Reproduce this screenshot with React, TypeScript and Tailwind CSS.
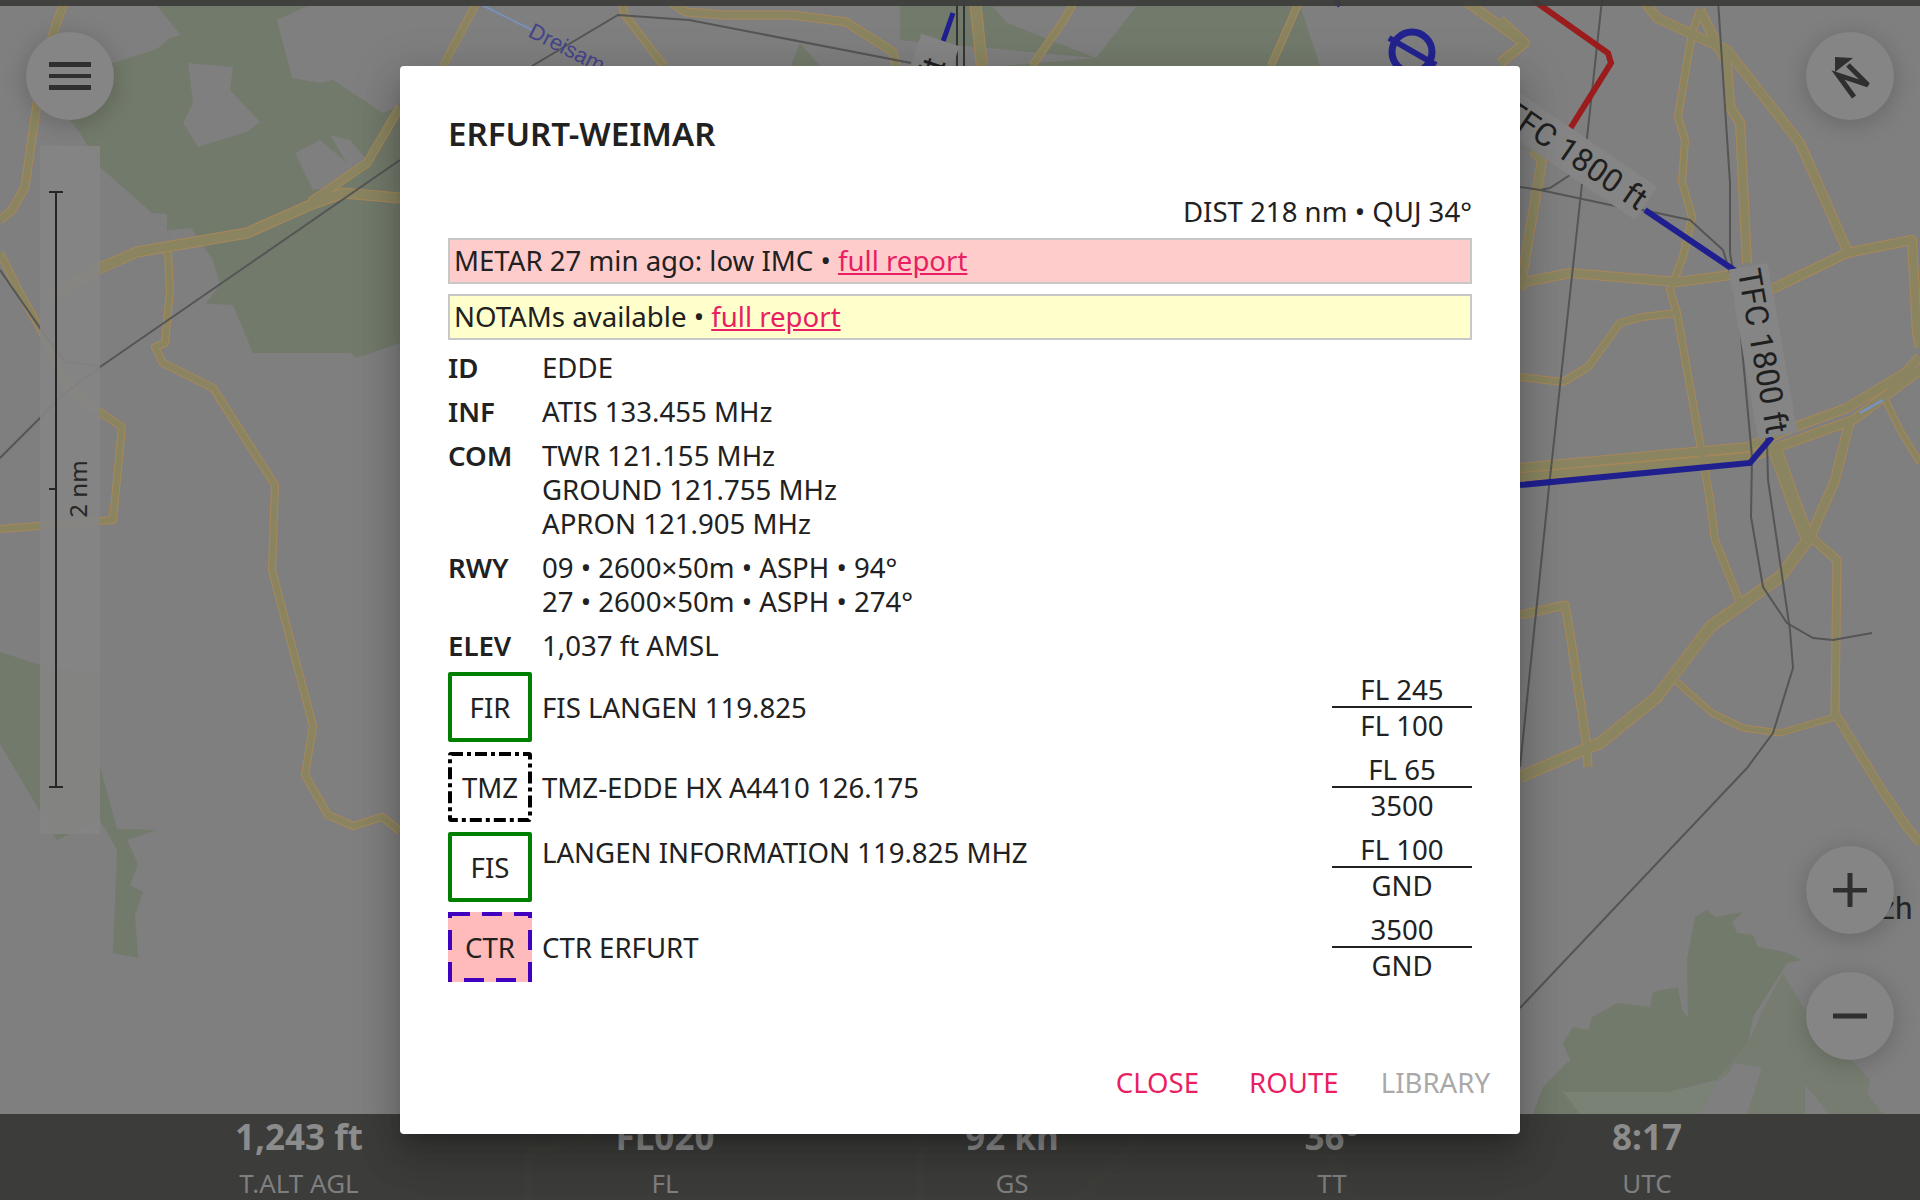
import React from "react";

const font = { fontFamily: '"Noto Sans", sans-serif' };

type R = [string, number];
const roads: R[] = [
  ["65,0 53,33 37,103 25,187 12,210 0,220", 7],
  ["50,297 100,268 137,252 247,233 310,205 343,193 400,198", 9],
  ["310,202 328,190 367,163 400,107", 7],
  ["168,252 170,290 165,343 155,347 163,363 213,388 275,485 272,570 313,726 305,775 328,815 353,826 382,817 400,831", 6],
  ["0,253 20,293 40,328 67,385 82,400 122,427 113,520 0,529", 6],
  ["443,66 478,0", 6],
  ["621,0 625,15 664,66", 6],
  ["668,0 686,12 725,15 793,15 846,22 893,52 896,66", 7],
  ["975,0 982,66", 10],
  ["1032,66 1064,20 1075,0", 6],
  ["1271,66 1300,0", 6],
  ["1464,0 1520,40", 8],
  ["1500,20 1525,43 1500,63", 8],
  ["1643,0 1657,18 1727,50 1800,143 1847,250", 8],
  ["1700,10 1692,33 1678,117 1685,140 1682,182 1692,217 1683,257 1670,290 1677,313 1700,443 1710,500 1715,540 1740,602", 6],
  ["1700,10 1720,50 1727,63 1730,107 1740,123 1747,263", 8],
  ["1520,283 1570,273 1677,282 1730,275", 8],
  ["1770,290 1847,253 1912,240 1917,333 1920,347", 8],
  ["1533,150 1542,160 1520,290", 8],
  ["1520,377 1563,382 1588,367 1620,323 1642,317 1677,313", 6],
  ["1520,468 1748,447 1787,430 1847,408 1905,373 1920,357", 8],
  ["1520,477 1750,457 1853,420 1920,370", 8],
  ["1773,443 1793,500 1807,537", 12],
  ["1850,420 1835,480 1810,538", 8],
  ["1883,395 1900,430 1920,463", 5],
  ["1520,777 1600,743 1657,697 1710,627 1780,577 1810,537", 10],
  ["1812,538 1837,560 1835,713 1880,787 1907,827 1920,843", 7],
  ["1520,615 1565,605 1570,633 1587,747 1588,767", 7],
  ["1677,682 1712,713 1743,728 1780,733 1835,717", 5],
  ["529,1134 529,1200", 5],
  ["532,1153 596,1135", 5],
  ["921,1135 921,1200", 5],
  ["1326,1147 1352,1200", 5],
  ["1079,1200 1141,1137", 5],
];

const wires = [
  "400,160 100,367 60,397 40,418 0,458",
  "0,270 40,328 65,362 100,366",
  "532,66 618,15 689,20 911,63",
  "1602,0 1549,487 1520,767",
  "1718,0 1730,183 1730,253 1737,293 1752,457 1751,517 1763,587 1787,623 1813,638 1833,640 1872,633",
  "1733,290 1767,443 1768,480 1790,630 1793,668 1773,733 1747,768 1520,1008",
  "1520,187 1540,190 1550,188 1570,175",
  "1540,190 1620,207 1643,210 1690,220 1723,250 1730,273",
];

function MapLayer() {
  const forest = "#727a6b";
  const bg = "#7f7f7f";
  return (
    <svg className="absolute inset-0 h-[1200px] w-[1920px]" viewBox="0 0 1920 1200">
      <rect width="1920" height="1200" fill={bg} />
      <polygon fill={forest} points="157,6 400,6 400,343 357,358 350,353 253,353 233,305 197,303 167,230 152,213 100,167 80,133 70,120 113,63 157,49 170,38 180,35 193,50" />
      <polygon fill={bg} points="277,20 307,6 400,6 400,105 383,113 333,80 320,83 292,78" />
      <polygon fill={bg} points="188,63 233,67 230,90 260,122 247,132 198,147 183,123 193,103" />
      <polygon fill={bg} points="295,153 320,140 347,163 330,135 350,140 367,160 333,187 313,190" />
      <polygon fill={bg} points="152,213 167,214 167,230 191,228 213,260 220,285 205,305 197,303 167,230" />
      <polygon fill={forest} points="0,652 40,665 100,672 100,766 117,829 157,830 127,840 138,864 130,885 143,892 135,915 138,958 113,953 117,850 100,820 57,840 0,744" />
      <polygon fill={forest} points="1533,1114 1543,1087 1570,1060 1563,1043 1573,1027 1588,1030 1592,1017 1605,1010 1617,1003 1650,1007 1653,992 1678,987 1682,1010 1688,1018 1687,960 1695,917 1707,910 1715,917 1743,912 1732,922 1737,933 1753,935 1758,947 1785,952 1802,960 1787,963 1753,1017 1748,1043 1717,1080 1668,1092 1563,1092 1582,1114" />
      <polygon fill="#7a8275" points="1563,1092 1668,1092 1717,1082 1700,1114 1580,1114" />
      <polygon fill="#767d70" points="1763,1010 1783,973 1803,1007 1870,1080 1867,1093 1883,1114 1747,1114 1733,1070 1717,1082 1748,1043" />
      <polygon fill={bg} points="1733,1063 1762,1068 1747,1114 1717,1114" />
      <polygon fill={bg} points="1805,1114 1805,1085 1830,1114" />
      <polygon fill={forest} points="900,6 1300,6 1320,66 791,66 800,43 820,66 1000,66 1096,58 1136,7 993,7 1007,23 1096,58 900,40" />
      <polyline points="482,5 532,30" fill="none" stroke="#7a90b8" strokeWidth="2" />
      {roads.map(([p, w], i) => (
        <polyline key={`e${i}`} points={p} fill="none" stroke="#a98759" strokeWidth={w + 2} strokeLinejoin="round" />
      ))}
      {roads.map(([p, w], i) => (
        <polyline key={`f${i}`} points={p} fill="none" stroke="#8a8560" strokeWidth={w} strokeLinejoin="round" />
      ))}
      <polyline points="1860,413 1883,400" fill="none" stroke="#7a90b8" strokeWidth="3" />
      {wires.map((p, i) => (
        <polyline key={`w${i}`} points={p} fill="none" stroke="#555555" strokeWidth="2" />
      ))}
      <line x1="957" y1="0" x2="957" y2="66" stroke="#1f1f1f" strokeWidth="1.5" />
      <line x1="964" y1="0" x2="964" y2="66" stroke="#1f1f1f" strokeWidth="1.5" />
      <polyline points="1533,0 1608,53 1611,63 1568,132" fill="none" stroke="#9b1c1c" strokeWidth="6" />
      <polyline points="953,13 939,53" fill="none" stroke="#1f1f8f" strokeWidth="5" />
      <polyline points="1645,210 1737,272" fill="none" stroke="#1f1f8f" strokeWidth="6" />
      <polyline points="1772,437 1750,463 1520,485" fill="none" stroke="#1f1f8f" strokeWidth="6" />
      <line x1="1336" y1="0" x2="1340" y2="6" stroke="#1f1f8f" strokeWidth="5" />
      <circle cx="1412" cy="52" r="20" fill="none" stroke="#232390" strokeWidth="7" />
      <line x1="1389" y1="38" x2="1436" y2="65" stroke="#232390" strokeWidth="6" />
      <g transform="rotate(27 527 36)">
        <text x="527" y="36" fontFamily="Liberation Sans" fontSize="22" fill="#44448a">Dreisam</text>
      </g>
      <g transform="rotate(34.4 1575 155)">
        <rect x="1489" y="135" width="172" height="40" fill="#858585" />
        <text x="1575" y="166" textAnchor="middle" fontFamily="Roboto" fontSize="32" fill="#1f1f1f">TFC 1800 ft</text>
      </g>
      <g transform="rotate(80 1763 351)">
        <rect x="1677" y="331" width="172" height="40" fill="#858585" />
        <text x="1763" y="362" textAnchor="middle" fontFamily="Roboto" fontSize="32" fill="#1f1f1f">TFC 1800 ft</text>
      </g>
      <g transform="rotate(-72 932 72)">
        <rect x="905" y="50" width="60" height="40" fill="#858585" />
        <text x="935" y="82" textAnchor="middle" fontFamily="Roboto" fontSize="32" fill="#1f1f1f">ft</text>
      </g>
      <text x="1850" y="919" fontFamily="Roboto" fontSize="32" fill="#262626">Erzh</text>
    </svg>
  );
}

function RoundButton({ className, children }: { className: string; children: React.ReactNode }) {
  return (
    <div
      className={`absolute flex h-[88px] w-[88px] items-center justify-center rounded-full bg-[#858585] shadow-[0_4px_24px_rgba(0,0,0,0.2)] ${className}`}
    >
      {children}
    </div>
  );
}

function ScaleBar() {
  return (
    <div className="absolute left-[40px] top-[146px] flex h-[688px] w-[60px] bg-[#858585]/90">
      <svg className="h-[688px] w-[30px]" viewBox="0 0 30 688">
        <path d="M9 46H23M16 46V641M9 641H23M9 343H16" fill="none" stroke="#262626" strokeWidth="2" />
      </svg>
      <div className="flex w-[16px] items-center justify-center pb-[2px]">
        <span className="shrink-0 -rotate-90 whitespace-nowrap text-[24px] leading-none text-[#262626]" style={font}>2 nm</span>
      </div>
    </div>
  );
}

function Stat({ value, label }: { value: string; label: string }) {
  return (
    <div className="flex flex-col items-center">
      <span className="text-[35px] font-bold leading-[46px] text-[#8c8c8c]">{value}</span>
      <span className="mt-[6px] text-[26px] leading-[34px] text-[#7f7f7f]">{label}</span>
    </div>
  );
}

function KV({ k, children }: { k: string; children: React.ReactNode }) {
  return (
    <div className="flex">
      <div className="w-[94px] shrink-0 font-semibold">{k}</div>
      <div>{children}</div>
    </div>
  );
}

function Airspace({
  tag,
  kind,
  text,
  top,
  bottom,
  alignTop,
}: {
  tag: string;
  kind: "solid" | "dashdot" | "dash";
  text: string;
  top: string;
  bottom: string;
  alignTop?: boolean;
}) {
  return (
    <div className="flex h-[70px]">
      <div
        className={`relative flex h-[70px] w-[84px] shrink-0 items-center justify-center rounded-[2px] ${
          kind === "solid" ? "border-4 border-[#008000]" : ""
        } ${kind === "dash" ? "bg-[#ffbbbb]" : ""}`}
      >
        {kind === "dashdot" && (
          <svg className="absolute inset-0" width="84" height="70" viewBox="0 0 84 70">
            <rect x="2" y="2" width="80" height="66" rx="1" fill="none" stroke="#000000" strokeWidth="4" strokeDasharray="12 4 4 4" />
          </svg>
        )}
        {kind === "dash" && (
          <svg className="absolute inset-0" width="84" height="70" viewBox="0 0 84 70">
            <rect x="2" y="2" width="80" height="66" fill="none" stroke="#4000c0" strokeWidth="4" strokeDasharray="20 12" />
          </svg>
        )}
        <span className="relative">{tag}</span>
      </div>
      <div className={`ml-[10px] flex-1 ${alignTop ? "pt-[3px]" : "self-center"}`}>{text}</div>
      <div className="flex w-[140px] shrink-0 flex-col text-center">
        <div className="h-[36px] border-b-2 border-[#212121]">{top}</div>
        <div className="h-[34px]">{bottom}</div>
      </div>
    </div>
  );
}

export default function App() {
  return (
    <div className="relative h-[1200px] w-[1920px] overflow-hidden bg-[#7f7f7f]" style={font}>
      <MapLayer />
      <div className="absolute inset-x-0 top-0 h-[6px] bg-[#3d3d3b]/95" />

      <RoundButton className="left-[26px] top-[32px]">
        <svg width="42" height="28" viewBox="0 0 42 28" fill="#2f2f2f">
          <rect x="0" y="0" width="42" height="5" />
          <rect x="0" y="12" width="42" height="4" />
          <rect x="0" y="23" width="42" height="5" />
        </svg>
      </RoundButton>
      <ScaleBar />
      <RoundButton className="left-[1806px] top-[32px]">
        <svg width="88" height="88" viewBox="0 0 88 88">
          <polygon points="29,25 47,26 29,40" fill="#2f2f2f" />
          <polyline points="42,33 62,53 32,43 48,65" fill="none" stroke="#2f2f2f" strokeWidth="5" />
        </svg>
      </RoundButton>
      <RoundButton className="left-[1806px] top-[846px]">
        <svg width="34" height="34" viewBox="0 0 34 34" fill="#2f2f2f">
          <rect x="0" y="15" width="34" height="4.5" />
          <rect x="14.5" y="0" width="5" height="34" />
        </svg>
      </RoundButton>
      <RoundButton className="left-[1806px] top-[972px]">
        <svg width="34" height="6" viewBox="0 0 34 6" fill="#2f2f2f">
          <rect x="0" y="0.5" width="34" height="5" />
        </svg>
      </RoundButton>

      <div className="absolute inset-x-0 bottom-0 grid h-[86px] grid-cols-[366px_366px_328px_312px_318px] justify-start bg-[#393937]/95 pl-[116px]">
        <Stat value="1,243 ft" label="T.ALT AGL" />
        <Stat value="FL020" label="FL" />
        <Stat value="92 kn" label="GS" />
        <Stat value="36°" label="TT" />
        <Stat value="8:17" label="UTC" />
      </div>

      <div className="absolute inset-0 flex items-center justify-center">
        <div className="flex h-[1068px] w-[1120px] flex-col rounded-[4px] bg-white pl-[48px] pt-[48px] text-[27.6px] leading-[34px] text-[#212121] shadow-[0_11px_15px_-7px_rgba(0,0,0,0.2),0_24px_38px_3px_rgba(0,0,0,0.14),0_9px_46px_8px_rgba(0,0,0,0.12)]">
          <div className="h-[40px] text-[33px] font-semibold leading-[40px]">ERFURT-WEIMAR</div>
          <div className="mr-[48px] mt-[40px] text-right">DIST 218 nm • QUJ 34°</div>
          <div className="mr-[48px] mt-[10px] h-[46px] border-2 border-[#c8c8c8] bg-[#ffcccc] pl-[4px] leading-[40px]">
            METAR 27 min ago: low IMC • <span className="text-[#e91e63] underline">full report</span>
          </div>
          <div className="mr-[48px] mt-[10px] h-[46px] border-2 border-[#c8c8c8] bg-[#ffffcc] pl-[4px] leading-[40px]">
            NOTAMs available • <span className="text-[#e91e63] underline">full report</span>
          </div>
          <div className="mr-[48px] mt-[10px] flex flex-col gap-[10px]">
            <KV k="ID">EDDE</KV>
            <KV k="INF">ATIS 133.455 MHz</KV>
            <KV k="COM">
              TWR 121.155 MHz<br />GROUND 121.755 MHz<br />APRON 121.905 MHz
            </KV>
            <KV k="RWY">
              09 • 2600×50m • ASPH • 94°<br />27 • 2600×50m • ASPH • 274°
            </KV>
            <KV k="ELEV">1,037 ft AMSL</KV>
            <Airspace tag="FIR" kind="solid" text="FIS LANGEN 119.825" top="FL 245" bottom="FL 100" />
            <Airspace tag="TMZ" kind="dashdot" text="TMZ-EDDE HX A4410 126.175" top="FL 65" bottom="3500" />
            <Airspace tag="FIS" kind="solid" text="LANGEN INFORMATION 119.825 MHZ" top="FL 100" bottom="GND" alignTop />
            <Airspace tag="CTR" kind="dash" text="CTR ERFURT" top="3500" bottom="GND" />
          </div>
          <div className="mb-[35px] mr-[30px] mt-auto flex justify-end">
            <span className="mr-[50px] text-[#e91e63]">CLOSE</span>
            <span className="mr-[42px] text-[#e91e63]">ROUTE</span>
            <span className="text-[#a9a9a9]">LIBRARY</span>
          </div>
        </div>
      </div>
    </div>
  );
}
